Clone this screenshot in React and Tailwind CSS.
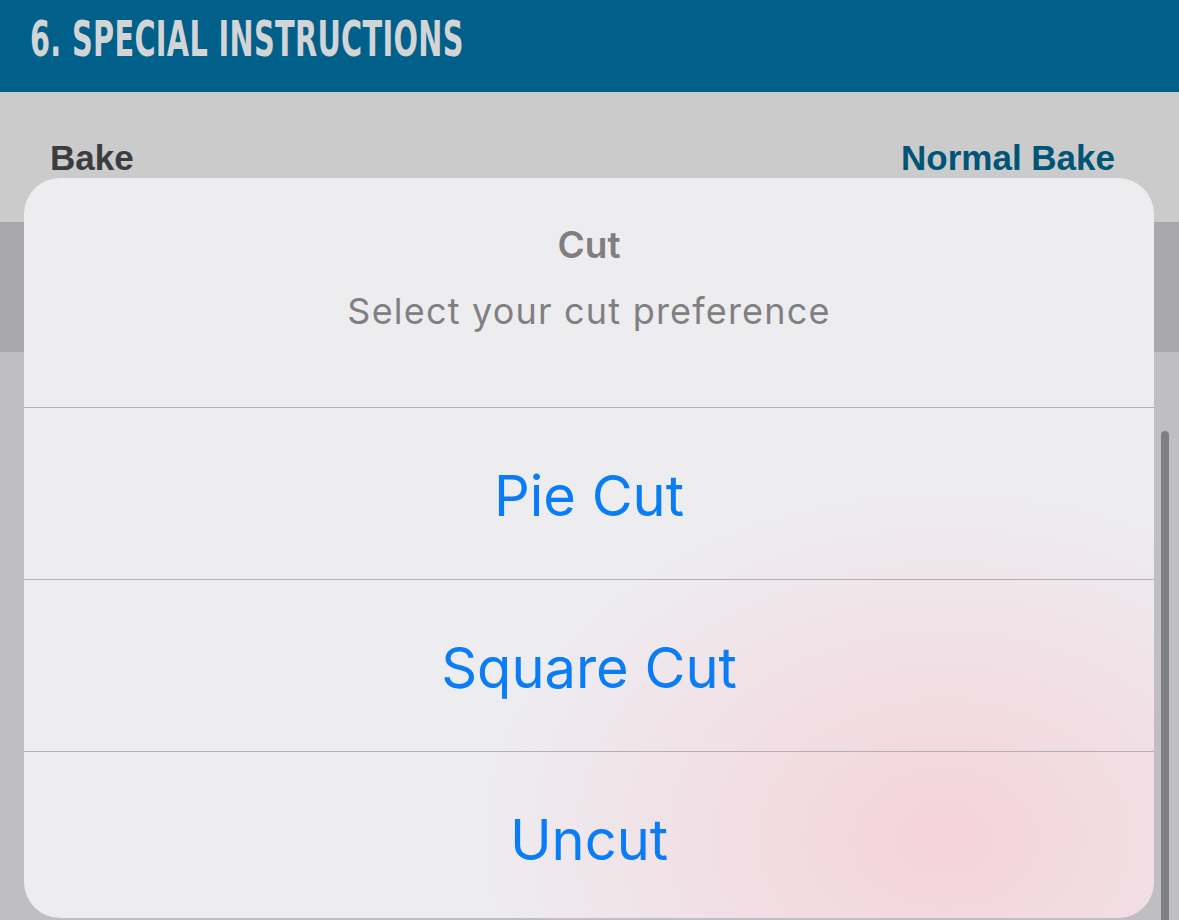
export default function App() {
  const options = ['Pie Cut', 'Square Cut', 'Uncut'];

  return (
    <div className="relative w-[1179px] h-[920px] overflow-hidden bg-[#bfbfc3]">
      {/* Section header */}
      <div className="h-[92px] bg-[#00608a] flex items-center pl-[30px] pb-[14px]">
        <h2
          className="text-[50px] leading-none font-bold text-[#d2d4d6] origin-left scale-x-[0.64] whitespace-nowrap tracking-[0.5px]"
          style={{ fontFamily: '"DejaVu Sans Condensed", "DejaVu Sans", sans-serif' }}
        >
          6. SPECIAL INSTRUCTIONS
        </h2>
      </div>

      {/* Bake row */}
      <div
        className="h-[130px] bg-[#cbcbcb] flex items-start justify-between pl-[50px] pr-[64px] pt-[40px] text-[35px] font-bold"
        style={{ fontFamily: '"Liberation Sans", Arial, sans-serif' }}
      >
        <span className="text-[#3c3c3e]">Bake</span>
        <span className="text-[#005476]">Normal Bake</span>
      </div>

      {/* Next row (dimmed) */}
      <div className="h-[130px] bg-[#a9a9ad]" />

      {/* Scroll indicator */}
      <div className="absolute left-[1161px] top-[431px] w-[8px] h-[500px] rounded-full bg-[#7f7f83]" />

      {/* Action sheet */}
      <div
        className="absolute left-[24px] top-[178px] w-[1130px] h-[740px] rounded-[36px] overflow-hidden bg-[#ededf0]"
        style={{ fontFamily: 'Inter, "Noto Sans", sans-serif' }}
      >
        <div className="absolute inset-0 bg-[radial-gradient(ellipse_480px_360px_at_920px_660px,rgba(247,206,215,0.85),rgba(247,206,215,0)_100%)]" />
        <div className="relative flex flex-col">
          <div className="h-[230px] flex flex-col items-center border-b border-[#b2b2b6]">
            <div className="mt-[44px] text-[37px] font-semibold text-[#7f7f82] leading-[46px]">Cut</div>
            <div className="mt-[20px] text-[36px] text-[#808083] leading-[46px] tracking-[1.2px]">
              Select your cut preference
            </div>
          </div>
          {options.map((o, i) => (
            <div
              key={o}
              className={`h-[172px] flex items-center justify-center text-[56px] text-[#0a7cf6] pt-[4px] ${
                i < options.length - 1 ? 'border-b border-[#b2b2b6]' : ''
              }`}
            >
              {o}
            </div>
          ))}
        </div>
      </div>
    </div>
  );
}
